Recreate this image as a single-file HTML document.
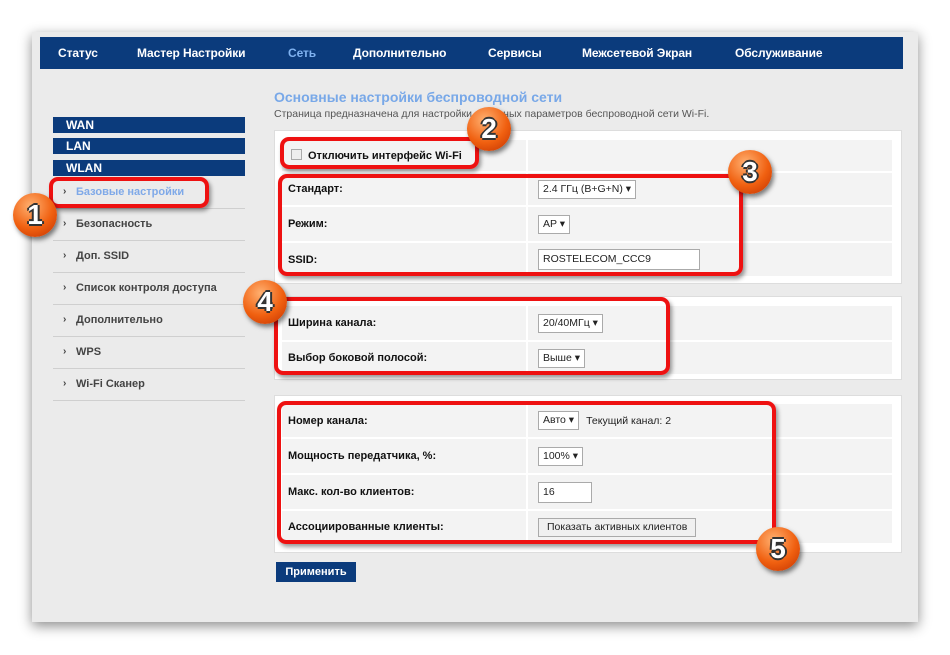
<!DOCTYPE html>
<html><head><meta charset="utf-8"><style>
*{margin:0;padding:0;box-sizing:border-box}
body{width:950px;height:655px;background:#fff;font-family:"Liberation Sans",Arial,sans-serif;position:relative;overflow:hidden}
.a{position:absolute}
#panel{left:32px;top:32px;width:886px;height:590px;background:#ebebeb;box-shadow:0 4px 12px rgba(0,0,0,.45)}
#nav{left:40px;top:37px;width:863px;height:32px;background:#0b3b7c}
#nav span{position:absolute;top:9px;color:#fff;font-weight:bold;font-size:12px;letter-spacing:-.1px}
.sb{left:53px;width:192px;height:16px;background:#0b3b7c;color:#fff;font-weight:bold;font-size:12px;padding-left:13px;line-height:16px}
.lk{left:53px;width:192px;height:32px;border-bottom:1px solid #cfcfcf;font-size:11px;color:#444;font-weight:bold;padding-left:23px;line-height:30px}
.lk:before{content:"›";position:absolute;left:10px;font-size:10px;color:#444}
.box{left:274px;width:628px;background:#fff;border:1px solid #ddd}
.row{left:282px;width:610px;background:#f3f3f3;font-size:11px;font-weight:bold;color:#111;display:flex;align-items:center}
.row .l{position:absolute;left:6px}
.row .v{position:absolute;left:244px;top:0;bottom:0;right:0;border-left:2px solid #fff;background:#f3f3f3;display:flex;align-items:center;padding-left:10px}
.sel{height:19px;border:1px solid #aaa;background:#fff;font-size:10.5px;font-weight:normal;padding:0 4px;line-height:17px;color:#222;white-space:nowrap}
.red{border:4px solid #e11;border-radius:9px;box-shadow:2px 3px 4px rgba(0,0,0,.4)}
.c{width:44px;height:44px;border-radius:50%;background:radial-gradient(circle at 40% 30%,#ffb070,#f06010 55%,#c03000);box-shadow:2px 3px 5px rgba(0,0,0,.5);color:#fff;font-weight:bold;font-size:28px;text-align:center;line-height:44px;text-shadow:-2px 0 #333,2px 0 #333,0 -2px #333,0 2px #333}
</style></head><body>
<div class="a" id="panel"></div>
<div class="a" id="nav">
<span style="left:18px">Статус</span><span style="left:97px">Мастер Настройки</span><span style="left:248px;color:#7fb2f0">Сеть</span><span style="left:313px">Дополнительно</span><span style="left:448px">Сервисы</span><span style="left:542px">Межсетевой Экран</span><span style="left:695px">Обслуживание</span>
</div>
<div class="a sb" style="top:117px">WAN</div>
<div class="a sb" style="top:138px">LAN</div>
<div class="a sb" style="top:160px">WLAN</div>
<div class="a lk" style="top:177px;color:#7fa9e8">Базовые настройки</div>
<div class="a lk" style="top:209px">Безопасность</div>
<div class="a lk" style="top:241px">Доп. SSID</div>
<div class="a lk" style="top:273px">Список контроля доступа</div>
<div class="a lk" style="top:305px">Дополнительно</div>
<div class="a lk" style="top:337px">WPS</div>
<div class="a lk" style="top:369px">Wi-Fi Сканер</div>

<div class="a" style="left:274px;top:89px;font-size:14px;font-weight:bold;color:#78a8e8">Основные настройки беспроводной сети</div>
<div class="a" style="left:274px;top:108px;font-size:10.5px;color:#555">Страница предназначена для настройки основных параметров беспроводной сети Wi-Fi.</div>

<div class="a box" style="top:130px;height:154px"></div>
<div class="a row" style="top:140px;height:31px"><span class="l" style="left:9px"><span style="display:inline-block;width:11px;height:11px;border:1px solid #aaa;background:#eee;vertical-align:-1px;margin-right:6px"></span>Отключить интерфейс Wi-Fi</span><div class="v"></div></div>
<div class="a row" style="top:173px;height:32px"><span class="l">Стандарт:</span><div class="v"><div class="sel">2.4 ГГц (B+G+N) ▾</div></div></div>
<div class="a row" style="top:207px;height:34px"><span class="l">Режим:</span><div class="v"><div class="sel">AP ▾</div></div></div>
<div class="a row" style="top:243px;height:33px"><span class="l">SSID:</span><div class="v"><div class="sel" style="width:162px;height:21px;line-height:19px">ROSTELECOM_CCC9</div></div></div>

<div class="a box" style="top:296px;height:84px"></div>
<div class="a row" style="top:306px;height:34px"><span class="l">Ширина канала:</span><div class="v"><div class="sel">20/40МГц ▾</div></div></div>
<div class="a row" style="top:342px;height:32px"><span class="l">Выбор боковой полосой:</span><div class="v"><div class="sel">Выше ▾</div></div></div>

<div class="a box" style="top:395px;height:158px"></div>
<div class="a row" style="top:404px;height:33px"><span class="l">Номер канала:</span><div class="v"><div class="sel">Авто ▾</div><span style="margin-left:7px;font-weight:normal;color:#222;font-size:10.5px">Текущий канал: 2</span></div></div>
<div class="a row" style="top:439px;height:34px"><span class="l">Мощность передатчика, %:</span><div class="v"><div class="sel">100% ▾</div></div></div>
<div class="a row" style="top:475px;height:34px"><span class="l">Макс. кол-во клиентов:</span><div class="v"><div class="sel" style="width:54px;height:21px;line-height:19px">16</div></div></div>
<div class="a row" style="top:511px;height:32px"><span class="l">Ассоциированные клиенты:</span><div class="v"><div class="sel" style="background:#f0f0f0;padding:0 8px">Показать активных клиентов</div></div></div>

<div class="a" style="left:276px;top:562px;width:80px;height:20px;background:#0b3b7c;color:#fff;font-weight:bold;font-size:11px;text-align:center;line-height:20px">Применить</div>

<div class="a red" style="left:49px;top:177px;width:160px;height:31px"></div>
<div class="a red" style="left:280px;top:137px;width:199px;height:32px"></div>
<div class="a red" style="left:278px;top:174px;width:465px;height:102px"></div>
<div class="a red" style="left:274px;top:297px;width:396px;height:78px"></div>
<div class="a red" style="left:277px;top:401px;width:499px;height:143px"></div>

<div class="a c" style="left:13px;top:193px">1</div>
<div class="a c" style="left:467px;top:107px">2</div>
<div class="a c" style="left:728px;top:150px">3</div>
<div class="a c" style="left:243px;top:280px">4</div>
<div class="a c" style="left:756px;top:527px">5</div>
</body></html>
